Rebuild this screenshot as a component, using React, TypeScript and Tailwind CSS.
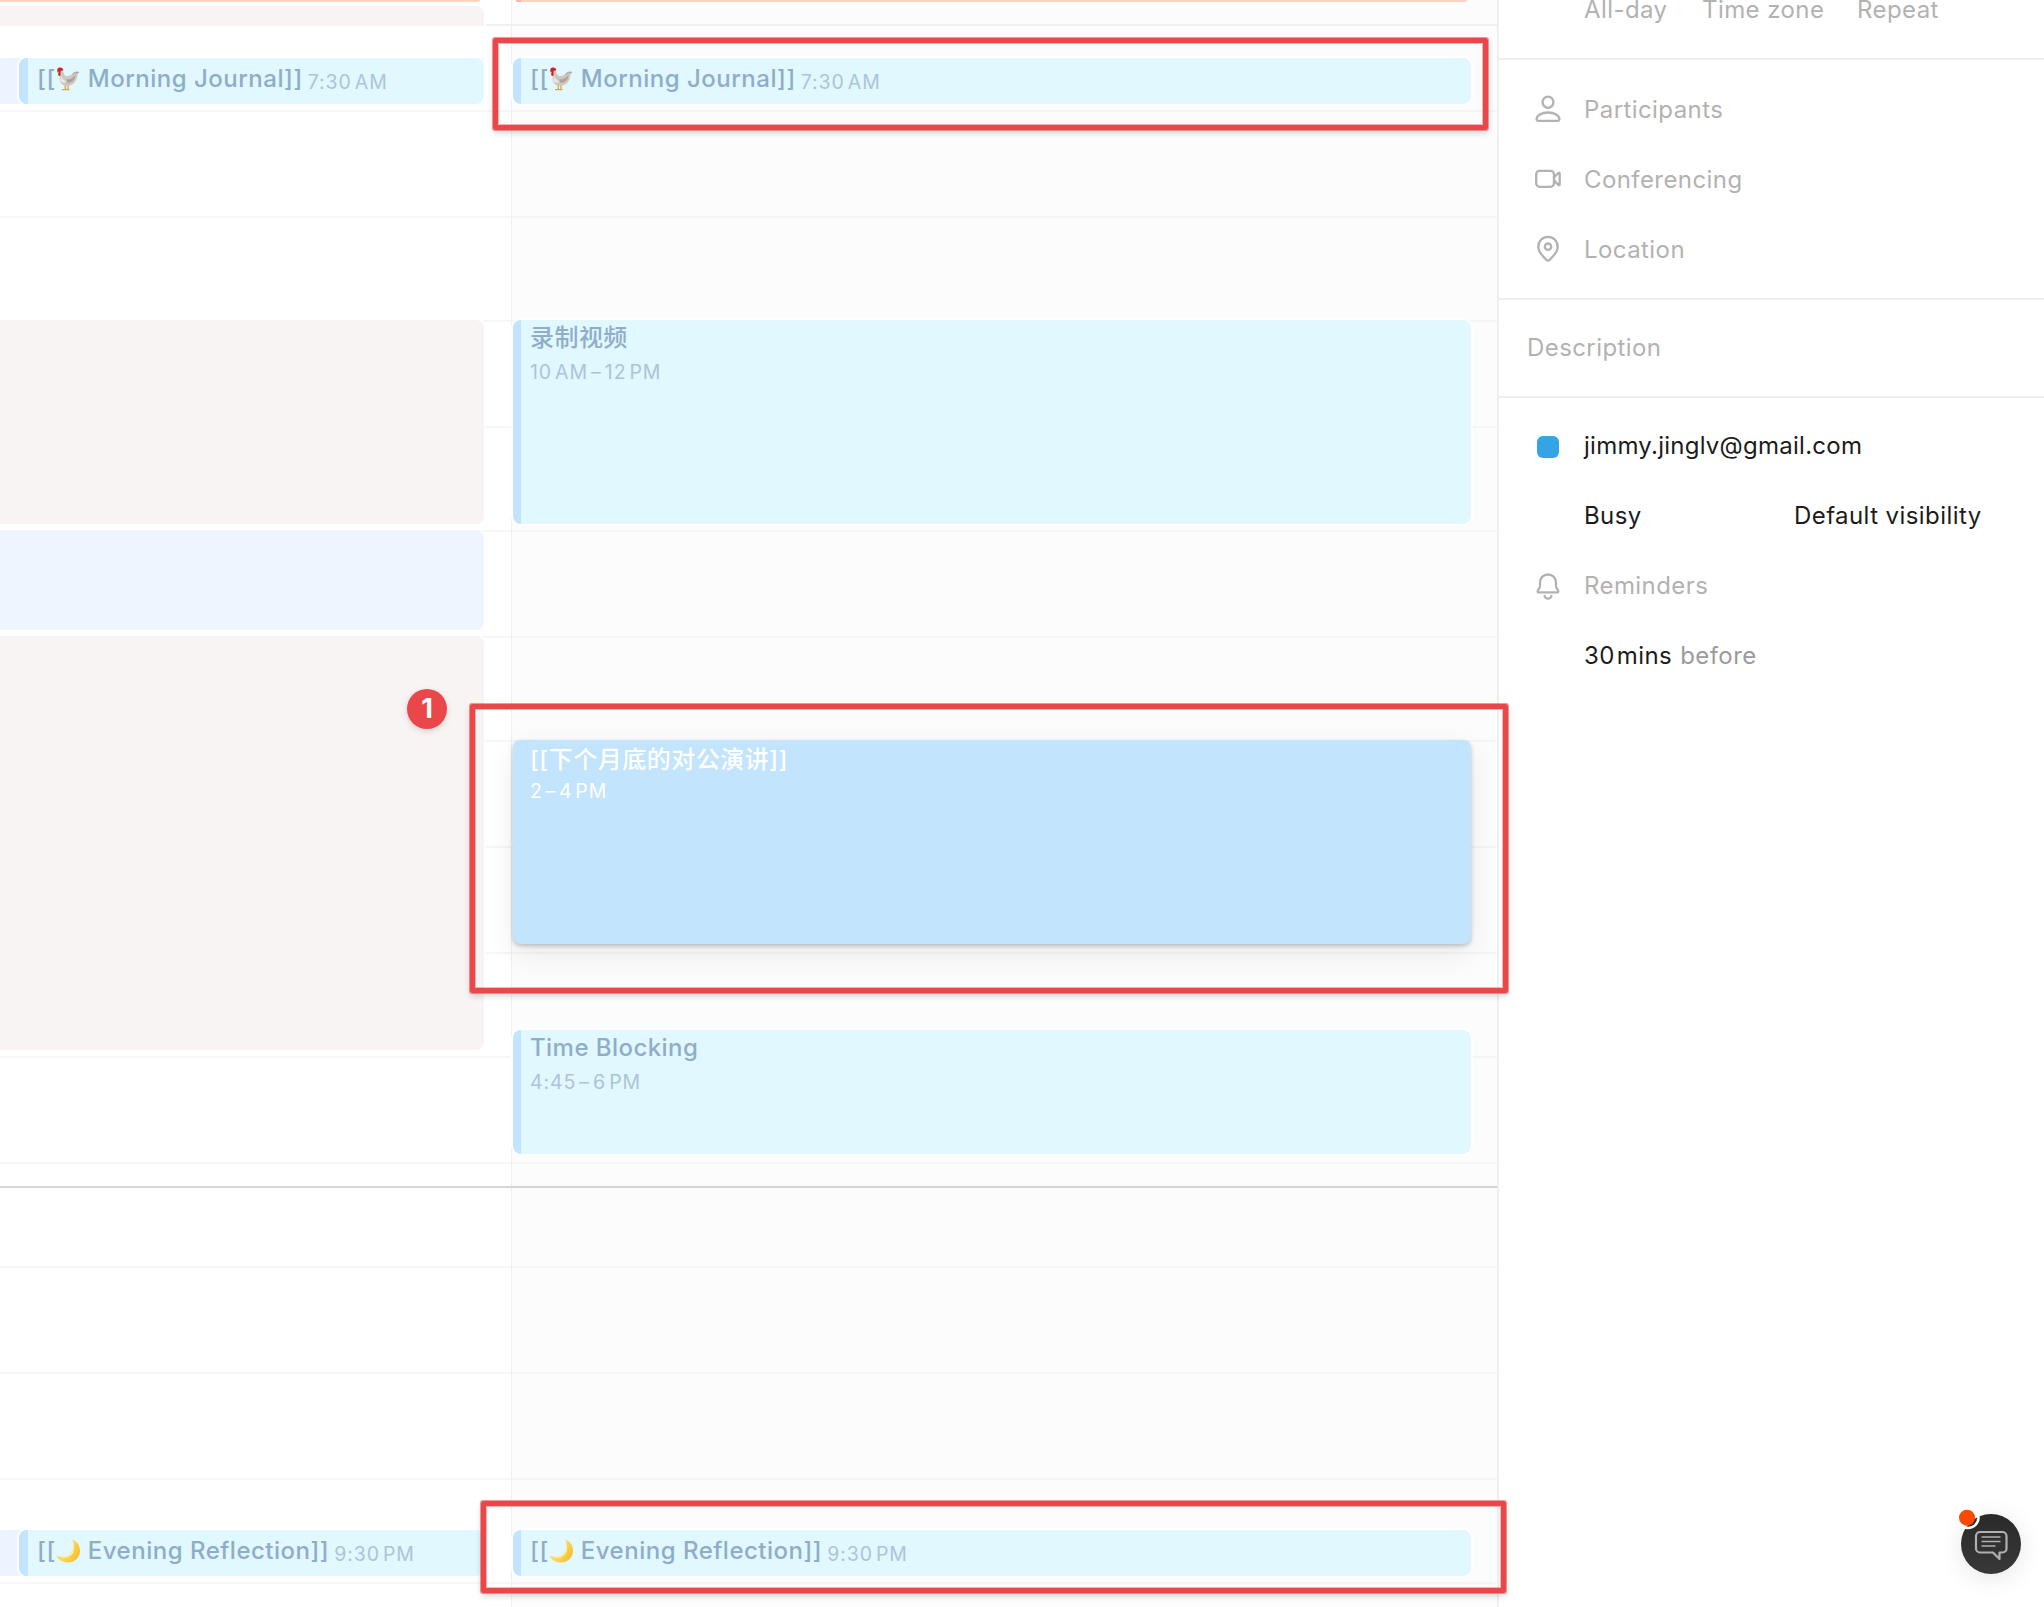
import type { ReactNode } from "react";

const GRID_LINES = [24, 110, 216, 320, 426, 530, 636, 740, 846, 952, 1056, 1162, 1266, 1372, 1478, 1582];

function GridLines({ tone }: { tone: string }) {
  return (
    <div className="absolute inset-0 flex flex-col overflow-hidden">
      {GRID_LINES.map((y, i) => (
        <div
          key={y}
          className={`h-0.5 w-full shrink-0 ${i === 0 ? "bg-[#f0f0f0]" : tone}`}
          style={{ marginTop: i === 0 ? y : y - GRID_LINES[i - 1] - 2 }}
        />
      ))}
    </div>
  );
}

function Rooster() {
  return (
    <svg width="25" height="24" viewBox="0 0 25 24" className="inline-block shrink-0">
      <path d="M9.300 18v4M12 18v4M6 22.600h4M9.500 22.600h4" stroke="#dba544" strokeWidth="1.300" fill="none" />
      <path d="M3 4c2.200-1.200 4.200 0 4.900 2.400.6 2.400 2.200 3.200 4.400 2.700 3-.7 3.900-2.900 6.200-4.200 1.900-1 4.300-.8 5.100.6-1.600.5-2.100 1.700-2.300 3.300-.5 5.600-4.600 10.100-10.200 10.100-5.300 0-8-4.200-7.500-8.700.2-2.200 0-4.200-.6-6.200z" fill="#cfc6c0" />
      <path d="M5 8c.7 3.500 2.800 6 6.300 6.300-1.200 1.800-4.600 2-6.600.3C4 12.500 4.900 10.500 5 8z" fill="#ece7e3" />
      <path d="M10.500 12c3 1.200 6.500-.2 8.900-3.900-.2 5.200-3.800 8.200-8.700 7.400z" fill="#aca19b" />
      <path d="M16.500 7.500c1.600-1.700 3.800-2.300 6-1.800" stroke="#a1968f" strokeWidth="0.800" fill="none" />
      <path d="M1.500 5C.6 2.800 1.600.8 3.300.6 5.800.2 7.800 1.600 7.200 3.800c-1.200-.5-2.200-.2-2.800.9.2 1.400.6 4-.8 4.400C2.300 9.300 1.900 7.600 2.300 6z" fill="#cc2429" />
      <path d="M2.600 4.500 1 5.900l1.900.3z" fill="#e8b04c" />
    </svg>
  );
}

function Moon() {
  return (
    <svg width="25" height="24" viewBox="0 0 25 24" className="inline-block shrink-0">
      <defs>
        <linearGradient id="moon" x1="0" y1="0.3" x2="1" y2="0.8">
          <stop offset="0" stopColor="#fbe28a" />
          <stop offset="0.6" stopColor="#fbd24a" />
          <stop offset="1" stopColor="#f5bb2b" />
        </linearGradient>
      </defs>
      <path d="M16.300.6C21 2.400 24 6.600 24 11.800c0 6.800-5.300 11.800-12 11.800C6.600 23.600 2.200 20.900.3 16.500c5 2 10.600 1.600 14-1.600 3.600-3.400 4.600-9 2-14.300z" fill="url(#moon)" />
      <path d="M.3 16.500c5 2 10.600 1.600 14-1.600 2.300-2.200 3.500-5.300 3.300-8.700 1.200 4.100.2 7.700-2.300 9.900C11.500 19.500 5.500 19.300.3 16.500z" fill="#fdeeb0" />
    </svg>
  );
}

function InlineEvent({ left, emoji, title, time, bar }: { left?: boolean; emoji: ReactNode; title: string; time: string; bar: string }) {
  return (
    <div className={`flex h-[46px] shrink-0 overflow-hidden rounded-lg bg-[#e1f8ff] ring-2 ring-white ${left ? "w-[465px]" : "w-[958px]"}`}>
      <div className={`h-full shrink-0 bg-[#c2e4fd] ${bar}`} />
      <div className="flex h-[42px] items-center whitespace-pre pl-[9px]">
        <span className="text-[24px] font-medium tracking-[0.6px] text-[#8fadc8]">[[</span>
        {emoji}
        <span className="text-[24px] font-medium tracking-[0.5px] text-[#8fadc8]"> {title}]]</span>
        <span className="pt-[7px] pl-[5px] text-[19.500px] tracking-[0.9px] [word-spacing:-3.300px] text-[#abc4da]">{time}</span>
      </div>
    </div>
  );
}

function BlockEvent({ title, time, className }: { title: string; time: string; className: string }) {
  return (
    <div className={`flex w-[958px] shrink-0 overflow-hidden rounded-lg bg-[#e1f8ff] ring-2 ring-white ${className}`}>
      <div className="h-full w-2 shrink-0 bg-[#c2e4fd]" />
      <div className="flex flex-col pl-[9px]">
        <span className="h-9 text-[24px] leading-9 font-medium tracking-[0.45px] text-[#8fadc8]">{title}</span>
        <span className="pt-px text-[19.500px] leading-[30px] tracking-[0.9px] [word-spacing:-3.300px] text-[#abc4da]">{time}</span>
      </div>
    </div>
  );
}

const iconProps = {
  width: 32,
  height: 32,
  viewBox: "0 0 32 32",
  fill: "none",
  stroke: "#b2b2b2",
  strokeWidth: 2.3,
  strokeLinecap: "round" as const,
  strokeLinejoin: "round" as const,
};

function PersonIcon() {
  return (
    <svg {...iconProps}>
      <ellipse cx="16" cy="9.200" rx="5.400" ry="5.600" />
      <path d="M16 19.500c-6.500 0-11.400 2.900-11.400 6.600 0 1.200.7 1.700 1.900 1.700h19c1.200 0 1.900-.5 1.900-1.700C27.400 22.400 22.500 19.500 16 19.500z" />
    </svg>
  );
}

function VideoIcon() {
  return (
    <svg {...iconProps}>
      <rect x="4.200" y="7.800" width="17.800" height="16" rx="3.500" />
      <path d="M22.200 14.200 26.200 10c.7-.6 1.500-.3 1.500.6v10.600c0 .9-.8 1.200-1.500.6L22.200 17.600" />
    </svg>
  );
}

function PinIcon() {
  return (
    <svg {...iconProps}>
      <path d="M16 27.700c-.6 0-1.100-.4-1.600-.9C10.800 23.400 6.300 18.900 6.300 13.900 6.300 8.200 10.400 3.900 16 3.900s9.700 4.300 9.700 10c0 5-4.500 9.500-8.100 12.900-.5.500-1 .9-1.600.9z" />
      <circle cx="16" cy="13.700" r="3.200" />
    </svg>
  );
}

function BellIcon() {
  return (
    <svg {...iconProps}>
      <path d="M16 5.500c-4.900 0-8 3.600-8 8.200v3.300c0 2.300-2.400 4-2.400 5.500 0 .5.300.8.900.8h19c.6 0 .9-.3.900-.8 0-1.500-2.400-3.200-2.400-5.500v-3.300c0-4.600-3.100-8.200-8-8.200z" />
      <path d="M12.500 26.800c.4 1.700 1.700 2.800 3.500 2.800s3.100-1.100 3.500-2.800" />
    </svg>
  );
}

function Row({ icon, children }: { icon?: ReactNode; children: ReactNode }) {
  return (
    <div className="flex h-[70px] items-center">
      <div className="ml-[33px] flex w-8 shrink-0 justify-center">{icon}</div>
      <div className="ml-5 flex flex-1 items-center pt-0.5 whitespace-pre">{children}</div>
    </div>
  );
}

const outline =
  "absolute rounded-[2px] border-[5px] border-[#ea474a] shadow-[0_0_0_1px_rgba(234,71,74,0.55),inset_0_0_0_1px_rgba(234,71,74,0.4),0_3px_6px_rgba(0,0,0,0.16)]";

export default function App() {
  return (
    <div className="relative flex h-[1607px] w-[2044px] overflow-hidden bg-white font-['Inter','Noto_Sans_CJK_SC',sans-serif]">
      <section className="relative h-full w-[511px] shrink-0">
        <GridLines tone="bg-[#f6f6f6]" />
        <div className="relative flex h-full flex-col items-start">
          <div className="h-0.5 w-[480px] shrink-0 rounded-br bg-[#ffd3c1]" />
          <div className="mt-1 h-5 w-[484px] shrink-0 rounded-tr-lg bg-[#f8f4f3] ring-2 ring-white" />
          <div className="mt-8 flex w-[484px] shrink-0 bg-[#edf4ff]">
            <div className="w-[19px]" />
            <InlineEvent left emoji={<Rooster />} title="Morning Journal" time="7:30 AM" bar="w-[9px]" />
          </div>
          <div className="mt-[216px] h-[204px] w-[484px] shrink-0 rounded-r-lg bg-[#f8f4f3] ring-2 ring-white" />
          <div className="mt-1.5 h-[100px] w-[484px] shrink-0 rounded-r-lg bg-[#edf5ff] ring-2 ring-white" />
          <div className="mt-1.5 h-[414px] w-[484px] shrink-0 rounded-r-lg bg-[#f8f4f3] ring-2 ring-white" />
          <div className="mt-[480px] flex w-[484px] shrink-0 bg-[#edf4ff]">
            <div className="w-[19px]" />
            <InlineEvent left emoji={<Moon />} title="Evening Reflection" time="9:30 PM" bar="w-[9px]" />
          </div>
        </div>
      </section>

      <section className="relative h-full w-[986px] shrink-0 border-l border-[#efefef] bg-[#fcfcfc]">
        <GridLines tone="bg-[#f5f5f5]" />
        <div className="relative flex h-full flex-col items-start pl-px">
          <div className="ml-[3px] h-0.5 w-[951px] shrink-0 overflow-hidden rounded-b bg-[#ffd3c1]">
            <div className="h-full w-[5px] bg-[#fdb59a]" />
          </div>
          <div className="h-14 shrink-0" />
          <InlineEvent emoji={<Rooster />} title="Morning Journal" time="7:30 AM" bar="w-2" />
          <BlockEvent title="录制视频" time="10 AM – 12 PM" className="mt-[216px] h-[204px]" />
          <div className="z-10 mt-[216px] flex h-[204px] w-[958px] shrink-0 flex-col rounded-lg bg-[#c2e4fd] pl-[17px] text-white shadow-[0_2px_4px_rgba(0,0,0,0.22),0_10px_30px_rgba(0,0,0,0.08)]">
            <span className="h-9 text-[24px] leading-10 font-medium tracking-[0.5px]">[[下个月底的对公演讲]]</span>
            <span className="text-[19.500px] leading-[30px] tracking-[0.9px] [word-spacing:-3.600px]">2 – 4 PM</span>
          </div>
          <BlockEvent title="Time Blocking" time="4:45 – 6 PM" className="mt-[86px] h-[124px]" />
          <div className="h-[376px] shrink-0" />
          <InlineEvent emoji={<Moon />} title="Evening Reflection" time="9:30 PM" bar="w-2" />
        </div>
      </section>

      <aside className="flex h-full flex-1 flex-col border-l-2 border-[#efefef] bg-white text-[24px] tracking-[0.42px] text-[#b2b2b2]">
        <div className="h-[60px] shrink-0 border-b-2 border-[#eeeeee]">
          <div className="flex h-5 items-center pl-[85px] leading-5 whitespace-pre">
            <span className="w-[118px]">All-day</span>
            <span className="w-[155px]">Time zone</span>
            <span>Repeat</span>
          </div>
        </div>
        <div className="h-[240px] shrink-0 border-b-2 border-[#eeeeee] pt-3.5">
          <Row icon={<PersonIcon />}>Participants</Row>
          <Row icon={<VideoIcon />}>Conferencing</Row>
          <Row icon={<PinIcon />}>Location</Row>
        </div>
        <div className="flex h-[98px] shrink-0 items-center border-b-2 border-[#eeeeee] pl-7">Description</div>
        <div className="pt-3">
          <Row icon={<div className="mt-1 size-[22px] rounded-md bg-[#35a4e4]" />}>
            <span className="tracking-[0.25px] text-[#1c1c1c]">jimmy.jinglv@gmail.com</span>
          </Row>
          <Row>
            <span className="w-[210px] text-[#1c1c1c]">Busy</span>
            <span className="text-[#1c1c1c]">Default visibility</span>
          </Row>
          <Row icon={<BellIcon />}>Reminders</Row>
          <Row>
            <span className="text-[#1c1c1c]">30</span>
            <span className="pl-0.5 text-[#1c1c1c]">mins</span>
            <span className="pl-2 text-[#9b9b9b]">before</span>
          </Row>
        </div>
      </aside>

      <div className="absolute top-[1186px] left-0 h-0.5 w-[1497px] bg-[#d5d5d5]" />

      <div className={`${outline} top-[38px] left-[493px] h-[92px] w-[995px]`} />
      <div className={`${outline} top-[704px] left-[470px] z-20 h-[289px] w-[1038px]`} />
      <div className={`${outline} top-[1501px] left-[481px] h-[92px] w-[1025px]`} />
      <div className="absolute top-[689px] left-[407px] flex size-10 items-center justify-center rounded-full bg-[#ea474a] text-[27px] font-bold text-white shadow-[0_2px_6px_rgba(0,0,0,0.15)]">
        1
      </div>

      <div className="absolute top-[1514px] left-[1961px] size-[60px] rounded-full shadow-[0_4px_24px_rgba(0,0,0,0.1)]">
        <svg width="72" height="72" viewBox="-12 -12 72 72" className="absolute -top-3 -left-3">
          <defs>
            <linearGradient id="bubble" x1="0" y1="0" x2="0" y2="1">
              <stop offset="0" stopColor="#2a2a2a" />
              <stop offset="1" stopColor="#383838" />
            </linearGradient>
          </defs>
          <circle cx="30" cy="30" r="30" fill="url(#bubble)" />
          <circle cx="7" cy="3.500" r="10.500" fill="none" stroke="#fff" strokeWidth="2.500" />
          <circle cx="6" cy="3.700" r="8" fill="#ff4800" />
          <path d="M19 18h22.500a4 4 0 0 1 4 4v12.500a4 4 0 0 1-4 4H38.500v6.500l-6.500-6.500H19a4 4 0 0 1-4-4V22a4 4 0 0 1 4-4z" fill="none" stroke="#b0b0b0" strokeWidth="2.200" strokeLinejoin="round" />
          <path d="M20.500 23h19M20.500 27.500h19M20.500 32h14" stroke="#b0b0b0" strokeWidth="1.500" />
        </svg>
      </div>
    </div>
  );
}
